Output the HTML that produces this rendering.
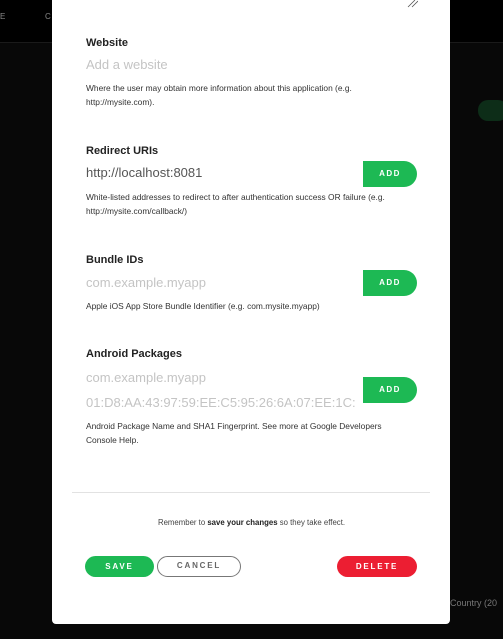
<!DOCTYPE html>
<html><head><meta charset="utf-8"><style>
*{margin:0;padding:0;box-sizing:border-box}
body{width:503px;height:639px;background:#080808;position:relative;overflow:hidden;font-family:"Liberation Sans",sans-serif}
.a{position:absolute;white-space:nowrap}
.m{position:absolute;left:52px;top:-10px;width:398px;height:634px;background:#fff;border-radius:4px}
.lab{font-size:11px;font-weight:bold;color:#222}
.inp{font-size:13px;color:#c4c4c4}
.help{font-size:8.4px;color:#333;line-height:14px}
.add{position:absolute;left:363px;width:54px;height:26px;background:#1db954;color:#fff;border-radius:0 13px 13px 0;font-size:8px;font-weight:bold;letter-spacing:1.5px;text-align:center;line-height:26px}
.btn{position:absolute;top:556px;height:21px;border-radius:11px;font-size:8px;font-weight:bold;letter-spacing:1.8px;text-align:center;line-height:21px}
</style></head><body>
<div class="a" style="left:0;top:0;width:503px;height:43px;background:#000;border-bottom:1px solid #1a1a1a"></div>
<div class="a" style="left:0;top:12px;font-size:8px;color:#888">E</div>
<div class="a" style="left:45px;top:12px;font-size:8px;color:#888">C</div>
<div class="a" style="left:478px;top:100px;width:30px;height:21px;border-radius:10px;background:#0d2d18"></div>
<div class="a" style="left:450px;top:598px;font-size:9px;color:#777">Country (20</div>
<div class="m"></div>
<svg class="a" style="left:406px;top:0" width="12" height="8"><path d="M2 7L9 0M6 7L12 1" stroke="#555" stroke-width="0.8"/></svg>
<div class="a lab" style="left:86px;top:37px">Website</div>
<div class="a inp" style="left:86px;top:57px">Add a website</div>
<div class="a help" style="left:86px;top:81px">Where the user may obtain more information about this application (e.g.<br>http://mysite.com).</div>
<div class="a lab" style="left:86px;top:145px">Redirect URIs</div>
<div class="a inp" style="left:86px;top:165px;color:#555">http://localhost:8081</div>
<div class="add" style="top:161px">ADD</div>
<div class="a help" style="left:86px;top:190px">White-listed addresses to redirect to after authentication success OR failure (e.g.<br>http://mysite.com/callback/)</div>
<div class="a lab" style="left:86px;top:254px">Bundle IDs</div>
<div class="a inp" style="left:86px;top:275px">com.example.myapp</div>
<div class="add" style="top:270px">ADD</div>
<div class="a help" style="left:86px;top:299px">Apple iOS App Store Bundle Identifier (e.g. com.mysite.myapp)</div>
<div class="a lab" style="left:86px;top:348px">Android Packages</div>
<div class="a inp" style="left:86px;top:370px">com.example.myapp</div>
<div class="a inp" style="left:86px;top:395px">01:D8:AA:43:97:59:EE:C5:95:26:6A:07:EE:1C:</div>
<div class="add" style="top:377px">ADD</div>
<div class="a help" style="left:86px;top:419px">Android Package Name and SHA1 Fingerprint. See more at Google Developers<br>Console Help.</div>
<div class="a" style="left:72px;top:492px;width:358px;height:1px;background:#e2e2e2"></div>
<div class="a" style="left:0;width:503px;top:518px;text-align:center;font-size:7.8px;color:#444">Remember to <b style="color:#222">save your changes</b> so they take effect.</div>
<div class="btn" style="left:85px;width:69px;background:#1db954;color:#fff">SAVE</div>
<div class="btn" style="left:157px;width:84px;border:1.5px solid #777;color:#666;line-height:18px">CANCEL</div>
<div class="btn" style="left:337px;width:80px;background:#ec1e32;color:#fff">DELETE</div>
</body></html>
